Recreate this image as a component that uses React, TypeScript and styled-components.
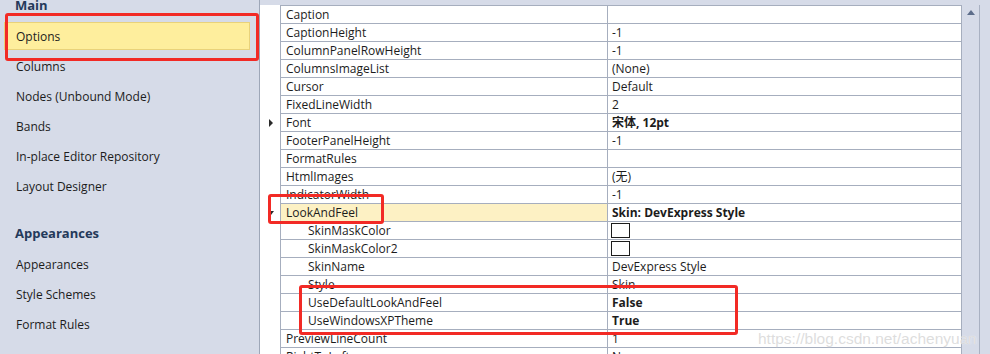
import React from "react";
import styled, { createGlobalStyle } from "styled-components";

const GlobalStyle = createGlobalStyle`
  html, body {
    margin: 0;
    padding: 0;
    background: #d6dbe8;
  }
  body {
    font-family: "Open Sans", "Noto Sans", "Noto Sans CJK SC", sans-serif;
    font-size: 12px;
    color: #1c1c1c;
  }
`;

const Frame = styled.div`
  position: relative;
  display: flex;
  width: 990px;
  height: 354px;
  overflow: hidden;
`;

const Sidebar = styled.div`
  width: 259px;
  flex-shrink: 0;
  background: #d6dbe8;
  border-right: 1px solid #9ea7b8;
  overflow: hidden;
`;

const NavList = styled.div`
  display: flex;
  flex-direction: column;
  margin-top: -5px;
`;

const GroupTitle = styled.div<{ $gap?: number }>`
  height: 20px;
  line-height: 20px;
  margin: ${(p) => p.$gap ?? 0}px 0 7px 15px;
  font-weight: 700;
  font-size: 13px;
  color: #24395a;
`;

const NavItem = styled.div<{ $active?: boolean }>`
  height: 28px;
  line-height: 28px;
  margin: 0 9px 2px 4px;
  padding-left: 11px;
  box-sizing: border-box;
  border: 1px solid ${(p) => (p.$active ? "#e9d27a" : "transparent")};
  background: ${(p) => (p.$active ? "#feee9d" : "transparent")};
  color: #1c1c1c;
`;

const Panel = styled.div`
  flex: 1;
  display: flex;
  flex-direction: column;
  background: #d6dbe8;
`;

const TopBand = styled.div`
  height: 5px;
  flex-shrink: 0;
`;

const Body = styled.div`
  flex: 1;
  display: flex;
`;

const GridArea = styled.div`
  width: 702px;
  background: #ffffff;
  display: flex;
  flex-direction: column;
`;

const Row = styled.div`
  display: grid;
  grid-template-columns: 20px 328px 354px;
  height: 18px;
  flex-shrink: 0;
  &:first-child {
    height: 19px;
  }
  &:first-child > div:not(:first-child) {
    border-top: 1px solid #a6aebe;
    height: 19px;
  }
`;

const Indicator = styled.div`
  display: flex;
  align-items: center;
  justify-content: center;
  padding-left: 2px;
`;

const NameCell = styled.div<{ $child?: boolean; $focused?: boolean }>`
  box-sizing: border-box;
  height: 18px;
  border-left: 1px solid #a6aebe;
  border-right: 1px solid #a6aebe;
  border-bottom: 1px solid #a6aebe;
  padding-left: ${(p) => (p.$child ? 27 : 5)}px;
  line-height: 17px;
  white-space: nowrap;
  overflow: hidden;
  background: ${(p) => (p.$focused ? "#fdf1c4" : "#ffffff")};
`;

const ValueCell = styled.div<{ $bold?: boolean }>`
  box-sizing: border-box;
  height: 18px;
  border-right: 1px solid #a6aebe;
  border-bottom: 1px solid #a6aebe;
  padding-left: 4px;
  line-height: 17px;
  white-space: nowrap;
  overflow: hidden;
  font-weight: ${(p) => (p.$bold ? 700 : 400)};
  display: flex;
  align-items: center;
`;

const Swatch = styled.span`
  display: inline-block;
  width: 17px;
  height: 13px;
  border: 1px solid #1c1c1c;
  background: #ffffff;
  margin-left: -1px;
`;

const ScrollBar = styled.div`
  width: 17px;
  display: flex;
  justify-content: center;
  padding-top: 5px;
  border-right: 1px solid #a9b1c2;
`;

const Callout = styled.div<{ $x: number; $y: number; $w: number; $h: number }>`
  position: absolute;
  left: ${(p) => p.$x}px;
  top: ${(p) => p.$y}px;
  width: ${(p) => p.$w}px;
  height: ${(p) => p.$h}px;
  box-sizing: border-box;
  border: 3px solid #f22a25;
  border-radius: 3px;
  pointer-events: none;
`;

const Watermark = styled.div`
  position: absolute;
  left: 758px;
  top: 330px;
  font-family: "Liberation Sans", Arial, sans-serif;
  font-size: 15.5px;
  color: rgba(210, 210, 210, 0.75);
  text-shadow: 0 0 1px rgba(255, 255, 255, 0.95);
  white-space: nowrap;
`;

type Prop = {
  name: string;
  value?: string;
  bold?: boolean;
  child?: boolean;
  swatch?: boolean;
  marker?: "expand" | "collapse";
  focused?: boolean;
};

const props: Prop[] = [
  { name: "Caption" },
  { name: "CaptionHeight", value: "-1" },
  { name: "ColumnPanelRowHeight", value: "-1" },
  { name: "ColumnsImageList", value: "(None)" },
  { name: "Cursor", value: "Default" },
  { name: "FixedLineWidth", value: "2" },
  { name: "Font", value: "宋体, 12pt", bold: true, marker: "expand" },
  { name: "FooterPanelHeight", value: "-1" },
  { name: "FormatRules" },
  { name: "HtmlImages", value: "(无)" },
  { name: "IndicatorWidth", value: "-1" },
  { name: "LookAndFeel", value: "Skin: DevExpress Style", bold: true, marker: "collapse", focused: true },
  { name: "SkinMaskColor", child: true, swatch: true },
  { name: "SkinMaskColor2", child: true, swatch: true },
  { name: "SkinName", value: "DevExpress Style", child: true },
  { name: "Style", value: "Skin", child: true },
  { name: "UseDefaultLookAndFeel", value: "False", bold: true, child: true },
  { name: "UseWindowsXPTheme", value: "True", bold: true, child: true },
  { name: "PreviewLineCount", value: "1" },
  { name: "RightToLeft", value: "No" },
];

const Marker = ({ kind }: { kind?: "expand" | "collapse" }) => {
  if (kind === "expand")
    return (
      <svg width="6" height="8" viewBox="0 0 6 8">
        <path d="M1 0 L5 4 L1 8 Z" fill="#2a2a2a" />
      </svg>
    );
  if (kind === "collapse")
    return (
      <svg width="6" height="6" viewBox="0 0 6 6">
        <path d="M0 1 L6 1 L3 5 Z" fill="#2a2a2a" />
      </svg>
    );
  return null;
};

export default function App() {
  return (
    <>
      <GlobalStyle />
      <Frame>
        <Sidebar>
          <NavList>
            <GroupTitle>Main</GroupTitle>
            <NavItem $active>Options</NavItem>
            <NavItem>Columns</NavItem>
            <NavItem>Nodes (Unbound Mode)</NavItem>
            <NavItem>Bands</NavItem>
            <NavItem>In-place Editor Repository</NavItem>
            <NavItem>Layout Designer</NavItem>
            <GroupTitle $gap={21}>Appearances</GroupTitle>
            <NavItem>Appearances</NavItem>
            <NavItem>Style Schemes</NavItem>
            <NavItem>Format Rules</NavItem>
          </NavList>
        </Sidebar>
        <Panel>
          <TopBand />
          <Body>
            <GridArea>
              {props.map((p) => (
                <Row key={p.name}>
                  <Indicator>
                    <Marker kind={p.marker} />
                  </Indicator>
                  <NameCell $child={p.child} $focused={p.focused}>
                    {p.name}
                  </NameCell>
                  <ValueCell $bold={p.bold}>
                    {p.swatch ? <Swatch /> : p.value}
                  </ValueCell>
                </Row>
              ))}
            </GridArea>
            <ScrollBar>
              <svg width="8" height="5" viewBox="0 0 8 5">
                <path d="M0 5 L4 0 L8 5 Z" fill="#5d6d8a" />
              </svg>
            </ScrollBar>
          </Body>
        </Panel>
        <Callout $x={5} $y={13} $w={254} $h={48} />
        <Callout $x={268} $y={194} $w={116} $h={30} />
        <Callout $x={299} $y={285} $w={439} $h={50} />
        <Watermark>https://blog.csdn.net/achenyuan</Watermark>
      </Frame>
    </>
  );
}
